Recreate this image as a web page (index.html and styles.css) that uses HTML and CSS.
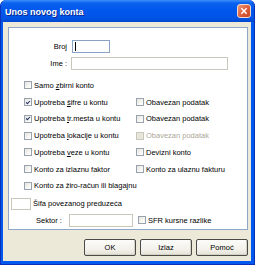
FILE: index.html
```html
<!DOCTYPE html>
<html>
<head>
<meta charset="utf-8">
<link rel="stylesheet" href="styles.css">
</head>
<body>
<div class="window">
  <div class="titlebar">
    <span class="title">Unos novog konta</span>
    <span class="close"><svg viewBox="0 0 14 14" width="14" height="14"><path d="M4.5 4.5 L9.5 9.5 M9.5 4.5 L4.5 9.5" stroke="#fff" stroke-width="1.7" stroke-linecap="square"/></svg></span>
  </div>
  <div class="client">
    <div class="panel">
      <div class="fields">
        <label class="lbl">Broj</label><div class="input short focus"><span class="caret"></span></div>
        <label class="lbl">Ime :</label><div class="input long"></div>
      </div>
      <div class="checks">
        <div class="chk"><span class="cb"></span><span>Samo <u>z</u>birni konto</span></div><div></div>
        <div class="chk"><span class="cb on"><svg viewBox="0 0 8 8" width="8" height="8"><path d="M1.5 3.8 L3.2 5.6 L6.6 2" fill="none" stroke="#1d2f63" stroke-width="1.4"/></svg></span><span>Upotreba <u>š</u>ifre u kontu</span></div>
        <div class="chk"><span class="cb"></span><span>Obavezan podatak</span></div>
        <div class="chk"><span class="cb on"><svg viewBox="0 0 8 8" width="8" height="8"><path d="M1.5 3.8 L3.2 5.6 L6.6 2" fill="none" stroke="#1d2f63" stroke-width="1.4"/></svg></span><span>Upotreba <u>t</u>r.mesta u kontu</span></div>
        <div class="chk"><span class="cb"></span><span>Obavezan podatak</span></div>
        <div class="chk"><span class="cb"></span><span>Upotreba <u>l</u>okacije u kontu</span></div>
        <div class="chk disabled"><span class="cb"></span><span>Obavezan podatak</span></div>
        <div class="chk"><span class="cb"></span><span>Upotreba <u>v</u>eze u kontu</span></div>
        <div class="chk"><span class="cb"></span><span>Devizni konto</span></div>
        <div class="chk"><span class="cb"></span><span>Konto za izlaznu faktor</span></div>
        <div class="chk"><span class="cb"></span><span>Konto za ulaznu fakturu</span></div>
        <div class="chk"><span class="cb"></span><span>Konto za žiro-račun ili blagajnu</span></div><div></div>
      </div>
      <div class="sifa"><div class="input tiny"></div><span>Šifa povezanog preduzeća</span></div>
      <div class="sektor"><label class="slbl">Sektor :</label><div class="input mid"></div><div class="chk"><span class="cb"></span><span>SFR kursne razlike</span></div></div>
    </div>
    <div class="buttons"><button class="btn">OK</button><button class="btn">Izlaz</button><button class="btn">Pomoć</button></div>
  </div>
</div>
</body>
</html>
```

FILE: styles.css
```css
* { box-sizing: border-box; }
html, body { margin: 0; padding: 0; background: #fff; }
body { font-family: "Liberation Sans", Arial, sans-serif; font-size: 7.5px; color: #000; }

.window {
  width: 255px;
  height: 265px;
  display: flex;
  flex-direction: column;
  background: #0058ee;
  border: 1px solid #0a2fb8;
  border-top: none;
  border-radius: 6px 6px 0 0;
  overflow: hidden;
}
.titlebar {
  height: 22px;
  flex: none;
  display: flex;
  align-items: center;
  justify-content: space-between;
  padding: 0 3px 0 4px;
  background: linear-gradient(to bottom, #3d8ffa 0, #0b62ee 3px, #0057ec 10px, #0054e6 18px, #0049cf 22px);
}
.title {
  color: #fff;
  font-weight: bold;
  font-size: 9px;
  padding-top: 1px;
  text-shadow: 1px 1px 0 #0a2a8e;
}
.close {
  width: 14px;
  height: 14px;
  display: flex;
  border: 1px solid #f4d8cc;
  border-radius: 3px;
  background: linear-gradient(135deg, #ec9a78 0, #dd6140 50%, #c9441f 100%);
  margin-top: -1px;
}
.close svg { width: 12px; height: 12px; }

.client {
  flex: 1;
  margin: 0 3px 3px 2px;
  background: #ece9d8;
  padding: 5px 3px 0 5px;
  display: flex;
  flex-direction: column;
}
.panel {
  height: 203px;
  background: #fff;
  border: 1px solid #8ea6c8;
  display: flex;
  flex-direction: column;
}
.fields {
  display: grid;
  grid-template-columns: 58px auto;
  column-gap: 4px;
  row-gap: 4px;
  padding-top: 12px;
  justify-content: start;
}
.lbl { text-align: right; line-height: 13px; white-space: nowrap; }
.input {
  height: 13px;
  background: #fff;
  border: 1px solid #c9c6bb;
}
.input.focus { border-color: #8aa3c4; display: flex; align-items: center; padding-left: 2px; }
.caret { width: 1px; height: 9px; background: #000; }
.short { width: 38px; margin-left: 1px; }
.long { width: 157px; }

.checks {
  margin-top: 7px;
  padding-left: 15px;
  display: grid;
  grid-template-columns: 112px 1fr;
  grid-auto-rows: 16.75px;
}
.chk {
  display: flex;
  align-items: center;
  white-space: nowrap;
}
.cb {
  width: 8px;
  height: 8px;
  flex: none;
  border: 1px solid #9aa3ad;
  background: linear-gradient(135deg, #e4e3dd 0, #fafaf8 70%, #fff 100%);
  margin-right: 2px;
  display: flex;
  align-items: center;
  justify-content: center;
}
.cb svg { width: 7px; height: 7px; }
.disabled { color: #aca899; }
.disabled .cb { background: #e8e6dc; border-color: #cac7bb; }

.sifa {
  margin-top: 3.5px;
  padding-left: 2px;
  display: flex;
  align-items: center;
  height: 12px;
  white-space: nowrap;
}
.tiny { width: 20px; height: 12px; margin-right: 2px; flex: none; }
.sektor {
  margin-top: 4px;
  padding-left: 27px;
  display: flex;
  align-items: center;
}
.slbl { width: 33px; white-space: nowrap; flex: none; }
.mid { width: 64px; margin-right: 5px; flex: none; }

.buttons {
  margin-top: 9px;
  display: flex;
  justify-content: flex-end;
  gap: 4px;
}
.btn {
  width: 52px;
  height: 17px;
  padding: 0;
  font-family: "Liberation Sans", Arial, sans-serif;
  font-size: 7.5px;
  color: #000;
  border: 1px solid #4a4a48;
  border-radius: 2px;
  background: linear-gradient(to bottom, #fbfbf9 0, #f3f2ec 60%, #e3e1d6 100%);
  box-shadow: inset -1px -1px 0 #d6d2c2;
}
```
